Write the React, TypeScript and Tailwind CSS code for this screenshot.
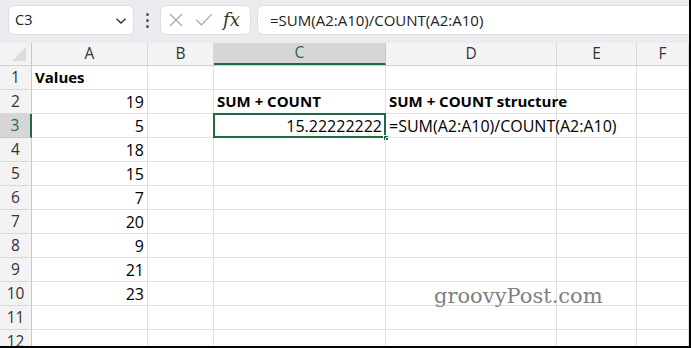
import React from "react";

const cols = [
  { k: "A", w: "w-[116px]" },
  { k: "B", w: "w-[66px]" },
  { k: "C", w: "w-[172px]" },
  { k: "D", w: "w-[171px]" },
  { k: "E", w: "w-[80px]" },
  { k: "F", w: "flex-1" },
];

type Cell = { t: string; bold?: boolean; right?: boolean };

const data: Record<number, Record<string, Cell>> = {
  1: { A: { t: "Values", bold: true } },
  2: { A: { t: "19", right: true }, C: { t: "SUM + COUNT", bold: true }, D: { t: "SUM + COUNT structure", bold: true } },
  3: { A: { t: "5", right: true }, C: { t: "15.22222222", right: true }, D: { t: "=SUM(A2:A10)/COUNT(A2:A10)" } },
  4: { A: { t: "18", right: true } },
  5: { A: { t: "15", right: true } },
  6: { A: { t: "7", right: true } },
  7: { A: { t: "20", right: true } },
  8: { A: { t: "9", right: true } },
  9: { A: { t: "21", right: true } },
  10: { A: { t: "23", right: true } },
};

const uiFont = { fontFamily: '"Open Sans", "Noto Sans", sans-serif' };

export default function App() {
  const rows = Array.from({ length: 12 }, (_, i) => i + 1);
  return (
    <div className="relative w-[691px] h-[348px] overflow-hidden bg-white border-r-2 border-b-2 border-black flex flex-col" style={uiFont}>
      {/* formula bar */}
      <div className="h-[43px] shrink-0 bg-[#eaecef] flex items-start pt-[5px] pl-[8px] gap-0">
        <div className="w-[126px] h-[30px] bg-white rounded-[6px] border border-[#dcdfe3] flex items-center justify-between pl-[6px] pr-[6px]">
          <span className="text-[14.5px] text-[#222]">C3</span>
          <svg width="12" height="8" viewBox="0 0 12 8" className="mt-[1px]">
            <path d="M1.5 1.8 L6 6 L10.5 1.8" fill="none" stroke="#333" strokeWidth="1.4" />
          </svg>
        </div>
        <div className="w-[26px] h-[30px] flex flex-col items-center justify-center gap-[3px]">
          <div className="w-[3px] h-[3px] bg-[#555] rounded-full" />
          <div className="w-[3px] h-[3px] bg-[#555] rounded-full" />
          <div className="w-[3px] h-[3px] bg-[#555] rounded-full" />
        </div>
        <div className="w-[91px] h-[30px] bg-white rounded-[6px] border border-[#dcdfe3] flex items-center pl-[7px]">
          <svg width="16" height="16" viewBox="0 0 16 16">
            <path d="M2 2 L14 14 M14 2 L2 14" stroke="#a8a8a8" strokeWidth="1.2" fill="none" />
          </svg>
          <svg width="18" height="16" viewBox="0 0 18 16" className="ml-[11px]">
            <path d="M1.5 8 L6.5 13 L16.5 2.5" stroke="#a8a8a8" strokeWidth="1.2" fill="none" />
          </svg>
          <span className="ml-[10px] text-[18px] italic text-[#333] leading-none" style={{ fontFamily: '"DejaVu Serif", "Liberation Serif", serif' }}>fx</span>
        </div>
        <div className="ml-[6px] flex-1 h-[30px] bg-white rounded-l-[6px] border border-r-0 border-[#dcdfe3] flex items-center pl-[12px]">
          <span className="text-[15px] text-[#222]">=SUM(A2:A10)/COUNT(A2:A10)</span>
        </div>
      </div>

      {/* column headers */}
      <div className="h-[23px] shrink-0 flex bg-[#f3f3f3] border-b border-[#d0d0d0]">
        <div className="w-[32px] shrink-0 border-r border-[#c8c8c8] relative">
          <svg width="16" height="16" viewBox="0 0 16 16" className="absolute right-[4px] bottom-[3px]">
            <path d="M15 1 L15 15 L1 15 Z" fill="#dcdcdc" />
          </svg>
        </div>
        {cols.map((c) => (
          <div
            key={c.k}
            className={`${c.w} shrink-0 flex items-center justify-center text-[15.5px] border-r ${c.k === "C" ? "bg-[#d6d6d6] text-[#1e6b42] border-b-2 border-b-[#1e6b42] border-r-[#c8c8c8]" : "text-[#333] border-[#d8d8d8]"}`}
          >
            {c.k}
          </div>
        ))}
      </div>

      {/* rows */}
      {rows.map((r) => (
        <div key={r} className="h-[24px] shrink-0 flex">
          <div
            className={`w-[32px] shrink-0 flex items-center justify-center text-[15.5px] border-b ${r === 3 ? "bg-[#d6d6d6] text-[#1e6b42] border-r-2 border-r-[#1e6b42] border-b-[#c8c8c8]" : "bg-[#f3f3f3] text-[#333] border-r border-r-[#c8c8c8] border-b-[#d8d8d8]"}`}
          >
            {r}
          </div>
          {cols.map((c) => {
            const cell = data[r]?.[c.k];
            const sel = r === 3 && c.k === "C";
            return (
              <div
                key={c.k}
                className={`${c.w} shrink-0 relative border-r border-b border-[#e1e1e1] flex items-center px-[3px] text-black whitespace-nowrap ${cell?.right ? "justify-end" : "justify-start"} ${cell?.bold ? "font-bold text-[15px]" : "text-[16px]"}`}
              >
                {cell?.t}
                {sel && (
                  <>
                    <div className="absolute -left-[1px] -top-[1px] -right-[1px] -bottom-[1px] border-2 border-[#1e6b42]" />
                    <div className="absolute -right-[4px] -bottom-[4px] w-[6px] h-[6px] bg-[#1e6b42] border border-white" />
                  </>
                )}
              </div>
            );
          })}
        </div>
      ))}

      <div
        className="absolute left-[434px] top-[281px] text-[21px] text-[#808080]"
        style={{ fontFamily: '"DejaVu Serif", "Liberation Serif", serif' }}
      >
        groovyPost.com
      </div>
    </div>
  );
}
